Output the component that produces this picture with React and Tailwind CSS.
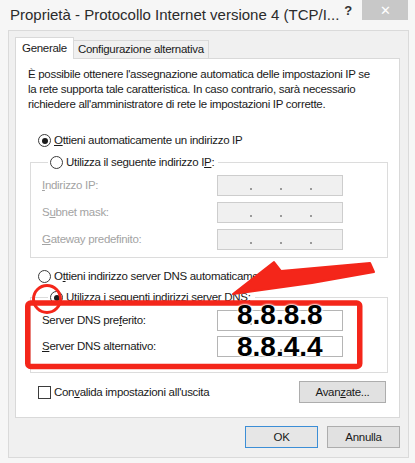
import React from 'react'

function Radio({ checked }) {
  return (
    <span className="w-[13px] h-[13px] rounded-full border border-[#3b3b3b] bg-white flex items-center justify-center shrink-0">
      {checked && <span className="w-[6px] h-[6px] rounded-full bg-[#1c1c1c]" />}
    </span>
  )
}

function IpBox({ disabled }) {
  return (
    <div
      className={`w-[126px] h-[21px] border flex items-end pb-[5px] pl-[32px] gap-[28px] ${
        disabled ? 'bg-[#f0f0f0] border-[#cdcdcd]' : 'bg-white border-[#b5b5b5]'
      }`}
    >
      <span className="w-[2px] h-[2px] bg-[#9a9a9a]" />
      <span className="w-[2px] h-[2px] bg-[#9a9a9a]" />
      <span className="w-[2px] h-[2px] bg-[#9a9a9a]" />
    </div>
  )
}

function FieldRow({ label, disabled }) {
  return (
    <div className="flex items-center h-[21px]">
      <span className={`w-[175px] ${disabled ? 'text-[#a3a3a3]' : 'text-[#1a1a1a]'}`}>{label}</span>
      <IpBox disabled={disabled} />
    </div>
  )
}

function Button({ children, primary, className = '' }) {
  return (
    <div
      className={`flex items-center justify-center border ${
        primary ? 'border-[#3c8ed6] bg-[#e6e6e6]' : 'border-[#adadad] bg-[#e1e1e1]'
      } ${className}`}
    >
      {children}
    </div>
  )
}

export default function App() {
  return (
    <div className="w-[415px] h-[463px] bg-[#f6f6f6] relative overflow-hidden font-['Liberation_Sans',Arial,sans-serif] text-[11.5px] tracking-[-0.3px] text-[#1a1a1a] leading-[15px]">
      {/* title bar */}
      <div className="h-[30px] flex items-start">
        <div className="pl-[10px] pt-[5px] text-[15px] tracking-normal leading-[20px] text-[#2b2b2b] whitespace-nowrap">
          Proprietà - Protocollo Internet versione 4 (TCP/I...
        </div>
        <div className="ml-auto flex items-start mr-[7px] shrink-0">
          <span className="mt-[3px] mr-[10px] text-[13px] font-bold text-[#333]">?</span>
          <div className="w-[46px] h-[20px] bg-[#c8c8c8] text-white flex items-center justify-center text-[13px]">
            ✕
          </div>
        </div>
      </div>

      {/* client area */}
      <div className="ml-[8px] w-[401px] h-[428px] border border-[#dadada] bg-[#f0f0f0] pl-[6px] pt-[6px]">
        {/* tabs */}
        <div className="flex items-end h-[21px]">
          <div className="h-[22px] -mb-px relative z-10 bg-white border border-b-0 border-[#d9d9d9] px-[6px] flex items-center">
            Generale
          </div>
          <div className="h-[18px] bg-[#f0f0f0] border border-l-0 border-b-0 border-[#d9d9d9] px-[4px] flex items-center">
            Configurazione alternativa
          </div>
        </div>

        {/* tab panel */}
        <div className="w-[385px] h-[360px] bg-white border border-[#d9d9d9] pl-[12px] pt-[8px]">
          <p className="w-[352px]">
            È possibile ottenere l'assegnazione automatica delle impostazioni IP se la rete supporta tale caratteristica. In caso
            contrario, sarà necessario richiedere all'amministratore di rete le impostazioni IP corrette.
          </p>

          <div className="mt-[21px] ml-[10px] flex items-center gap-[3px] h-[15px]">
            <Radio checked />
            <span>
              <u>O</u>ttieni automaticamente un indirizzo IP
            </span>
          </div>

          <fieldset className="mt-[7px] ml-[2px] w-[358px] border border-[#dcdcdc] pl-[11px] pt-[5px] pb-[7px]">
            <legend className="ml-[6px] pl-[2px] pr-[4px] flex items-center gap-[3px] h-[15px]">
              <Radio />
              <span>
                Utilizza il seguente indirizzo I<u>P</u>:
              </span>
            </legend>
            <div className="flex flex-col gap-[6px]">
              <FieldRow
                disabled
                label={
                  <>
                    <u>I</u>ndirizzo IP:
                  </>
                }
              />
              <FieldRow
                disabled
                label={
                  <>
                    S<u>u</u>bnet mask:
                  </>
                }
              />
              <FieldRow
                disabled
                label={
                  <>
                    <u>G</u>ateway predefinito:
                  </>
                }
              />
            </div>
          </fieldset>

          <div className="mt-[11px] ml-[10px] flex items-center gap-[3px] h-[15px]">
            <Radio />
            <span>
              O<u>t</u>tieni indirizzo server DNS automaticamente
            </span>
          </div>

          <fieldset className="mt-[6px] ml-[2px] w-[358px] border border-[#dcdcdc] pl-[11px] pt-[5px] pb-[15px]">
            <legend className="ml-[6px] pl-[2px] pr-[4px] flex items-center gap-[3px] h-[15px]">
              <Radio checked />
              <span>
                <u>U</u>tilizza i seguenti indirizzi server DNS:
              </span>
            </legend>
            <div className="flex flex-col gap-[5px]">
              <FieldRow
                label={
                  <>
                    Server DNS pre<u>f</u>erito:
                  </>
                }
              />
              <FieldRow
                label={
                  <>
                    <u>S</u>erver DNS alternativo:
                  </>
                }
              />
            </div>
          </fieldset>

          <div className="mt-[8px] flex items-center pr-[13px]">
            <div className="ml-[10px] flex items-center gap-[3px]">
              <span className="w-[13px] h-[13px] border border-[#3b3b3b] bg-white" />
              <span>
                Con<u>v</u>alida impostazioni all'uscita
              </span>
            </div>
            <Button className="ml-auto w-[87px] h-[22px]">
              <span>
                Avan<u>z</u>ate...
              </span>
            </Button>
          </div>
        </div>

        {/* dialog buttons */}
        <div className="flex justify-end gap-[9px] w-[385px] mt-[8px]">
          <Button primary className="w-[73px] h-[22px]">
            OK
          </Button>
          <Button className="w-[73px] h-[22px]">Annulla</Button>
        </div>
      </div>

      {/* red annotations */}
      <svg className="absolute left-0 top-0 pointer-events-none" width="415" height="463" viewBox="0 0 415 463">
        <polygon
          points="233,294 274,262 281,271 370,263 374,272 312,283 233,294"
          fill="#f4261a"
          stroke="#f4261a"
          strokeWidth="2"
          strokeLinejoin="round"
        />
        <circle cx="47" cy="299" r="13.5" fill="none" stroke="#f4261a" strokeWidth="3" />
        <rect x="27.75" y="303" width="332" height="63.5" rx="3" fill="none" stroke="#f4261a" strokeWidth="5.5" />
      </svg>
      <div className="absolute left-[237px] top-[301px] flex flex-col gap-[4px] pointer-events-none text-[28px] leading-[28px] tracking-normal font-bold text-black [text-shadow:0_0_2px_#fff,0_0_2px_#fff,0_0_3px_#fff,1px_1px_3px_#fff]">
        <span>8.8.8.8</span>
        <span>8.8.4.4</span>
      </div>
    </div>
  )
}
